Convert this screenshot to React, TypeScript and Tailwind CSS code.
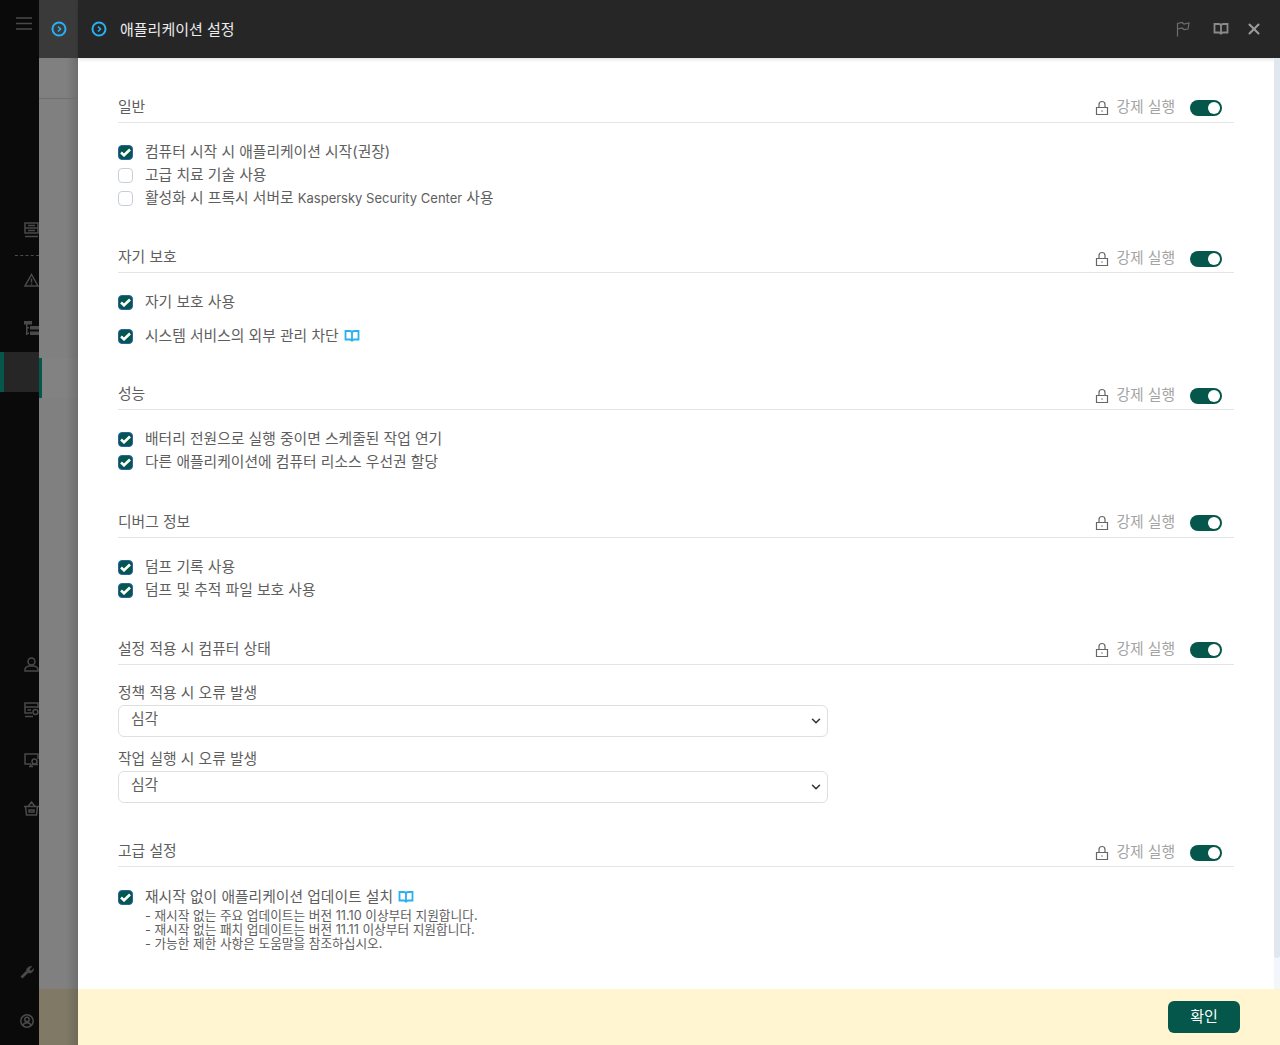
import React from 'react';
import { ChevronDown, X } from 'lucide-react';

const font = { fontFamily: 'Inter, "Noto Sans CJK KR", "Noto Sans", sans-serif' };

const CircleArrow = () => (
  <svg width="16" height="16" viewBox="0 0 16 16" fill="none" stroke="#29b0f0">
    <circle cx="8" cy="8" r="6.500" strokeWidth="2" />
    <path d="M7 5.500 9.500 8 7 10.500" strokeWidth="1.600" />
  </svg>
);

const Book = ({ color, size = 16 }: { color: string; size?: number }) => (
  <svg width={size} height={size} viewBox="0 0 16 16" fill="none" stroke={color} strokeWidth="1.800">
    <path d="M1.500 3h4.200C7 3 8 3.700 8 5v8.500c0-1.200-1-2-2.300-2H1.500zM14.500 3h-4.200C9 3 8 3.700 8 5v8.500c0-1.200 1-2 2.300-2h4.200z" />
  </svg>
);

const Check = ({ checked = true }: { checked?: boolean }) =>
  checked ? (
    <span className="flex h-[15px] w-[15px] shrink-0 items-center justify-center rounded-[4px] border-[1.5px] border-[#2b5fb5] bg-[#04574a]">
      <svg width="11" height="9" viewBox="0 0 11 9" fill="none" stroke="#ffffff" strokeWidth="2.600">
        <path d="M1 4.500 4 7.300 10 1.500" />
      </svg>
    </span>
  ) : (
    <span className="h-[15px] w-[15px] shrink-0 rounded-[4px] border-[1.5px] border-[#c8ced8] bg-white" />
  );

const Row = ({ children, checked, book, className = '' }: { children: React.ReactNode; checked?: boolean; book?: boolean; className?: string }) => (
  <div className={`flex h-[23px] items-center ${className}`}>
    <Check checked={checked} />
    <span className="ml-3 mb-[1px] whitespace-nowrap text-[14.8px] text-[#5e5e5e]">{children}</span>
    {book && (
      <span className="ml-[5px] mb-[1px]">
        <Book color="#29b0f0" />
      </span>
    )}
  </div>
);

const Section = ({ title, low, className = '', children }: { title: string; low?: boolean; className?: string; children: React.ReactNode }) => (
  <section className={className}>
    <div className="flex h-[33px] items-center justify-between border-b border-[#e4e4e4] pr-3">
      <span className="mt-[2px] text-[14.8px] text-[#5e5e5e]">{title}</span>
      <div className={`flex items-center ${low ? 'mt-[5px]' : 'mt-[3px]'}`}>
        <svg width="16" height="16" viewBox="0 0 16 16" fill="none" stroke="#666666" strokeWidth="1.200">
          <path d="M2.500 7.500h11v7h-11zM5 7.500V4.500C5 2.800 6.300 1.500 8 1.500s3 1.300 3 3v3M7.200 11h1.600" />
        </svg>
        <span className="ml-[6px] mr-[15px] mb-[1px] text-[14.8px] text-[#a3a3a3]">강제 실행</span>
        <span className="flex h-[16px] w-[32px] items-center justify-end rounded-full bg-[#04574a] pr-[2px]">
          <span className="h-[12px] w-[12px] rounded-full bg-white" />
        </span>
      </div>
    </div>
    {children}
  </section>
);

const Dropdown = () => (
  <div className="flex h-[32px] w-[710px] items-center justify-between rounded-[6px] border border-[#dcdfe3] bg-white pl-3 pr-[4px] text-[14.8px] text-[#5e5e5e]">
    <span className="mb-[3px]">심각</span>
    <ChevronDown size={14} strokeWidth={2.600} color="#333333" />
  </div>
);

const SideIcon = ({ className = '', children }: { className?: string; children: React.ReactNode }) => (
  <div className={`flex h-[24px] items-center ${className}`}>{children}</div>
);

const sideStroke = { fill: 'none', stroke: '#4a4a4a', strokeWidth: 1.500 };

const Sidebar = () => (
  <aside className="flex h-full w-[39px] shrink-0 flex-col overflow-hidden bg-[#0a0a0a] pt-[11px]">
    <SideIcon className="pl-[16px]">
      <svg width="16" height="13" viewBox="0 0 16 13" {...sideStroke}>
        <path d="M0 1h16M0 6.500h16M0 12h16" />
      </svg>
    </SideIcon>
    <SideIcon className="mt-[183px] pl-[24px]">
      <svg width="15" height="16" viewBox="0 0 15 16" {...sideStroke}>
        <path d="M1 1h13v10H1zM1 6h13M4 3.500h7M4 8.500h7M1 14.500h13" />
      </svg>
    </SideIcon>
    <div className="ml-[15px] mt-[13px] h-[1px] border-t border-dashed border-[#4a4a4a]" />
    <SideIcon className="mt-[12px] pl-[24px]">
      <svg width="15" height="14" viewBox="0 0 15 14" {...sideStroke}>
        <path d="M7.500 1.500 14 13H1zM7.500 5.500v4M7.500 10.500v1.200" />
      </svg>
    </SideIcon>
    <SideIcon className="mt-[24px] pl-[24px]">
      <svg width="15" height="15" viewBox="0 0 15 15" fill="#4a4a4a">
        <path d="M0 0h8v3.500H0zM2 3.500h1.500V14H2zM3.500 6H5v1.500H3.500zM3.500 11.500H5V13H3.500zM6 5h9v3.500H6zM6 10.500h9V14H6z" />
      </svg>
    </SideIcon>
    <div className="mt-[12px] h-[40px] w-full shrink-0 border-l-4 border-[#04574a] bg-[#262626]" />
    <SideIcon className="mt-[260px] pl-[24px]">
      <svg width="15" height="15" viewBox="0 0 15 15" {...sideStroke}>
        <circle cx="7.500" cy="4.500" r="3.500" />
        <path d="M1 14v-1.500c0-1.500 2-3 4-3.500h5c2 .5 4 2 4 3.500V14z" />
      </svg>
    </SideIcon>
    <SideIcon className="mt-[22px] pl-[24px]">
      <svg width="15" height="16" viewBox="0 0 15 16" {...sideStroke}>
        <path d="M8 11H1V1h13v5M1 5h13M3.500 8H7M1 14.500h8" />
        <circle cx="11.500" cy="10" r="2.500" />
      </svg>
    </SideIcon>
    <SideIcon className="mt-[26px] pl-[24px]">
      <svg width="15" height="15" viewBox="0 0 15 15" {...sideStroke}>
        <path d="M7 11H1V1h13v5M5 13.500h4M7 11v2.500" />
        <circle cx="10.500" cy="8.500" r="2.500" />
        <path d="M8 11.500h6" />
      </svg>
    </SideIcon>
    <SideIcon className="mt-[24px] pl-[24px]">
      <svg width="15" height="15" viewBox="0 0 15 15" {...sideStroke}>
        <path d="M0 5.500h15M1.500 5.500l1 8.500h10l1-8.500M4 5.500 7.500 1 11 5.500M5 9v2h5V9z" />
      </svg>
    </SideIcon>
    <SideIcon className="mt-[140px] pl-[20px]">
      <svg width="14" height="14" viewBox="0 0 14 14" fill="none" stroke="#4a4a4a">
        <path d="M1.500 12.500 7 7" strokeWidth="2.800" />
        <path d="M6.500 6.500C6 3.500 8.500 .8 12 1.500L9.500 4l.5 1.500L11.500 6 13.500 3.500C14 7 10.500 9 7.500 7.500z" fill="#4a4a4a" strokeWidth=".5" />
      </svg>
    </SideIcon>
    <SideIcon className="mt-[25px] pl-[20px]">
      <svg width="14" height="14" viewBox="0 0 14 14" {...sideStroke}>
        <circle cx="7" cy="7" r="6.200" />
        <circle cx="7" cy="5.500" r="2.200" />
        <path d="M3 11.500c.5-2 2-2.800 4-2.800s3.500.8 4 2.800" />
      </svg>
    </SideIcon>
  </aside>
);

const Backdrop = () => (
  <div className="flex h-full w-[39px] shrink-0 flex-col bg-gradient-to-r from-[#808080] from-70% to-[#6e6e6e]">
    <div className="flex h-[58px] shrink-0 items-center justify-center bg-[#3a3a3a]">
      <CircleArrow />
    </div>
    <div className="h-[41px] shrink-0 border-b border-[#6e6e6e]" />
    <div className="mt-[259px] h-[40px] shrink-0 border-l-[3px] border-[#04574a] bg-white/[0.02]" />
    <div className="flex-1" />
    <div className="h-[56px] shrink-0 bg-gradient-to-r from-[#7f7966] from-70% to-[#6f6a59]" />
  </div>
);

export default function App() {
  return (
    <div className="flex h-[1045px] w-full overflow-hidden bg-white" style={font}>
      <Sidebar />
      <Backdrop />
      <div className="flex h-full min-w-0 flex-1 flex-col">
        <header className="flex h-[58px] shrink-0 items-center bg-[#262626] pl-[13px] pr-[17px] shadow-[0_1px_4px_rgba(0,0,0,0.15)]">
          <CircleArrow />
          <span className="ml-[13px] mt-[2px] text-[15px] text-[#ececec]">애플리케이션 설정</span>
          <div className="ml-auto flex items-center">
            <svg width="14" height="16" viewBox="0 0 14 16" fill="none" stroke="#6e6e6e" strokeWidth="1.200">
              <path d="M1.500 15.500V2.500L6 1.500 8 3l5-1-1 6-4 .5L6 7l-4.500 1" />
            </svg>
            <span className="ml-[23px] flex">
              <Book color="#8a8a8a" />
            </span>
            <span className="ml-[16px] flex">
              <X size={18} strokeWidth={2.800} color="#9a9a9a" />
            </span>
          </div>
        </header>
        <div className="flex min-h-0 flex-1">
          <main className="min-w-0 flex-1 pl-[40px] pr-[40px] pt-[32px]">
            <Section title="일반">
              <div className="pt-[18px]">
                <Row>컴퓨터 시작 시 애플리케이션 시작(권장)</Row>
                <Row checked={false}>고급 치료 기술 사용</Row>
                <Row checked={false}>
                  활성화 시 프록시 서버로 <span className="text-[13px]">Kaspersky Security Center</span> 사용
                </Row>
              </div>
            </Section>
            <Section title="자기 보호" low className="mt-[30px]">
              <div className="pt-[18px]">
                <Row>자기 보호 사용</Row>
                <Row book className="mt-[11px]">시스템 서비스의 외부 관리 차단</Row>
              </div>
            </Section>
            <Section title="성능" low className="mt-[29px]">
              <div className="pt-[18px]">
                <Row>배터리 전원으로 실행 중이면 스케줄된 작업 연기</Row>
                <Row>다른 애플리케이션에 컴퓨터 리소스 우선권 할당</Row>
              </div>
            </Section>
            <Section title="디버그 정보" className="mt-[31px]">
              <div className="pt-[18px]">
                <Row>덤프 기록 사용</Row>
                <Row>덤프 및 추적 파일 보호 사용</Row>
              </div>
            </Section>
            <Section title="설정 적용 시 컴퓨터 상태" className="mt-[30px]">
              <div className="pt-[18px] text-[14.8px] text-[#5e5e5e]">
                <div className="h-[20px] leading-[20px]">정책 적용 시 오류 발생</div>
                <div className="mt-[2px]">
                  <Dropdown />
                </div>
                <div className="mt-[12px] h-[20px] leading-[20px]">작업 실행 시 오류 발생</div>
                <div className="mt-[2px]">
                  <Dropdown />
                </div>
              </div>
            </Section>
            <Section title="고급 설정" low className="mt-[31px]">
              <div className="pt-[19px]">
                <Row book>재시작 없이 애플리케이션 업데이트 설치</Row>
                <div className="pl-[27px] text-[12.7px] leading-[14px] text-[#5e5e5e]">
                  <div>- 재시작 없는 주요 업데이트는 버전 11.10 이상부터 지원합니다.</div>
                  <div>- 재시작 없는 패치 업데이트는 버전 11.11 이상부터 지원합니다.</div>
                  <div>- 가능한 제한 사항은 도움말을 참조하십시오.</div>
                </div>
              </div>
            </Section>
          </main>
          <div className="w-[6px] shrink-0 bg-[#f3f6fa]">
            <div className="h-[900px] rounded-b-[3px] bg-[#e1e7ef]" />
          </div>
        </div>
        <footer className="flex h-[56px] shrink-0 items-center justify-end bg-[#fff5d1] pr-[40px]">
          <button className="h-[32px] w-[72px] rounded-[6px] bg-[#04574a] text-[15px] text-white">확인</button>
        </footer>
      </div>
    </div>
  );
}
